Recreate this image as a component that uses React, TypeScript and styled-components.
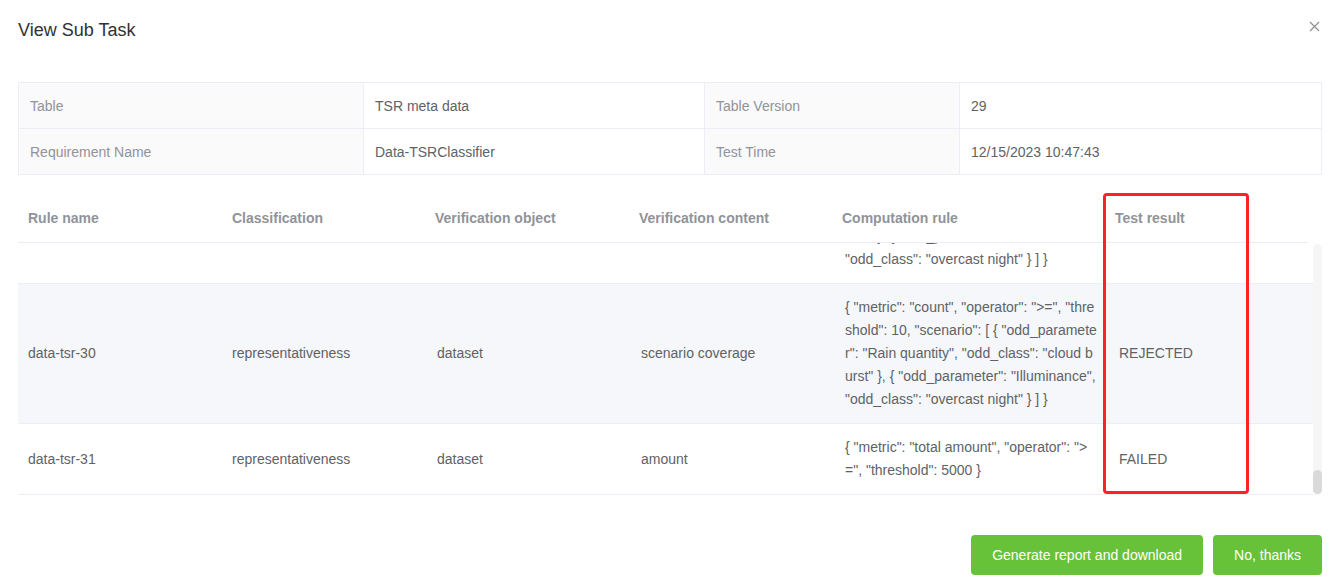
import React, { useLayoutEffect, useRef } from 'react';
import styled, { createGlobalStyle } from 'styled-components';

const GlobalStyle = createGlobalStyle`
  html, body {
    margin: 0;
    padding: 0;
    background: #fff;
    font-family: "Liberation Sans", Arial, Helvetica, sans-serif;
  }
`;

const Dialog = styled.div`
  width: 1337px;
  height: 587px;
  box-sizing: border-box;
  background: #fff;
  padding: 0 15px 0 18px;
  display: flex;
  flex-direction: column;
`;

const Header = styled.div`
  display: flex;
  align-items: center;
  justify-content: space-between;
  height: 60px;
`;

const Title = styled.h2`
  margin: 0;
  font-size: 18px;
  font-weight: 400;
  color: #303133;
  line-height: 24px;
`;

const CloseButton = styled.button`
  border: none;
  background: none;
  padding: 0;
  margin-right: 2px;
  margin-top: -8px;
  width: 12px;
  height: 12px;
  display: flex;
  align-items: center;
  justify-content: center;
  cursor: pointer;
`;

const InfoTable = styled.table`
  margin-top: 22px;
  width: 1304px;
  border-collapse: collapse;
  table-layout: fixed;
  font-size: 14px;
`;

const InfoCell = styled.td<{ $label?: boolean }>`
  height: 46px;
  box-sizing: border-box;
  padding: 0 11px;
  border: 1px solid #ebeef5;
  background: ${({ $label }) => ($label ? '#fafafa' : '#fff')};
  color: ${({ $label }) => ($label ? '#909399' : '#606266')};
`;

const Section = styled.div`
  position: relative;
  margin-top: 20px;
  width: 1304px;
`;

const GridTable = styled.table<{ $width: number }>`
  border-collapse: collapse;
  table-layout: fixed;
  width: ${({ $width }) => $width}px;
  font-size: 14px;
`;

const HeadWrap = styled.div`
  width: 1290px;
  overflow: hidden;
  border-bottom: 1px solid #ebeef5;
`;

const HeadCell = styled.th`
  text-align: left;
  padding: 12px 10px;
  height: 46px;
  box-sizing: border-box;
  font-weight: 700;
  color: #909399;
  line-height: 23px;
`;

const BodyArea = styled.div`
  display: flex;
  height: 252px;
`;

const BodyWrap = styled.div`
  width: 1295px;
  height: 100%;
  overflow-y: scroll;
  scrollbar-width: none;

  &::-webkit-scrollbar {
    display: none;
  }
`;

const ScrollTrack = styled.div`
  width: 9px;
  height: 251px;
  margin-top: 1px;
  background: #f6f6f6;
  border-radius: 5px;
  display: flex;
  flex-direction: column;
  justify-content: flex-end;
  padding-bottom: 1px;
  box-sizing: border-box;
`;

const ScrollThumb = styled.div`
  height: 24px;
  background: #dadada;
  border-radius: 5px;
`;

const Row = styled.tr<{ $hover?: boolean }>`
  background: ${({ $hover }) => ($hover ? '#f5f7fa' : '#fff')};
  border-bottom: 1px solid #ebeef5;
`;

const Cell = styled.td<{ $wrap?: boolean }>`
  padding: 12px 10px;
  color: #606266;
  line-height: 23px;
  vertical-align: middle;
  word-break: ${({ $wrap }) => ($wrap ? 'break-all' : 'normal')};
`;

const Highlight = styled.div`
  position: absolute;
  left: 1085px;
  top: -2px;
  width: 140px;
  height: 295px;
  border: 3px solid #ff2222;
  border-radius: 4px;
  pointer-events: none;
`;

const Footer = styled.div`
  display: flex;
  justify-content: flex-end;
  gap: 10px;
  width: 1304px;
  margin-top: 40px;
`;

const Button = styled.button`
  height: 40px;
  padding: 0 21px;
  border: none;
  border-radius: 4px;
  background: #67c23a;
  color: #fff;
  font-family: inherit;
  font-size: 14px;
  cursor: pointer;
`;

const headWidths = [204, 203, 204, 203, 273, 203];
const bodyWidths = [204, 205, 204, 204, 274, 204];
const titles = [
  'Rule name',
  'Classification',
  'Verification object',
  'Verification content',
  'Computation rule',
  'Test result',
];

const coverageRule =
  '{ "metric": "count", "operator": ">=", "threshold": 10, "scenario": [ { "odd_parameter": "Rain quantity", "odd_class": "cloud burst" }, { "odd_parameter": "Illuminance", "odd_class": "overcast night" } ] }';

interface RuleRow {
  name: string;
  classification: string;
  object: string;
  content: string;
  rule: string;
  result: string;
}

const rows: RuleRow[] = [
  ...Array.from({ length: 16 }, (_, i) => ({
    name: `data-tsr-${14 + i}`,
    classification: 'representativeness',
    object: 'dataset',
    content: 'scenario coverage',
    rule: coverageRule,
    result: i % 3 === 0 ? 'PASSED' : 'REJECTED',
  })),
  {
    name: 'data-tsr-30',
    classification: 'representativeness',
    object: 'dataset',
    content: 'scenario coverage',
    rule: coverageRule,
    result: 'REJECTED',
  },
  {
    name: 'data-tsr-31',
    classification: 'representativeness',
    object: 'dataset',
    content: 'amount',
    rule: '{ "metric": "total amount", "operator": ">=", "threshold": 5000 }',
    result: 'FAILED',
  },
];

const Cols = ({ widths }: { widths: number[] }) => (
  <colgroup>
    {widths.map((w, i) => (
      <col key={i} width={w} />
    ))}
  </colgroup>
);

const App: React.FC = () => {
  const bodyRef = useRef<HTMLDivElement>(null);

  useLayoutEffect(() => {
    const el = bodyRef.current;
    if (el) el.scrollTop = el.scrollHeight;
  }, []);

  return (
    <Dialog>
      <GlobalStyle />
      <Header>
        <Title>View Sub Task</Title>
        <CloseButton aria-label="Close">
          <svg width="11" height="11" viewBox="0 0 11 11">
            <path d="M1 1L10 10M10 1L1 10" stroke="#909399" strokeWidth="1.3" />
          </svg>
        </CloseButton>
      </Header>

      <InfoTable>
        <colgroup>
          <col width={345} />
          <col width={341} />
          <col width={255} />
          <col />
        </colgroup>
        <tbody>
          <tr>
            <InfoCell $label>Table</InfoCell>
            <InfoCell>TSR meta data</InfoCell>
            <InfoCell $label>Table Version</InfoCell>
            <InfoCell>29</InfoCell>
          </tr>
          <tr>
            <InfoCell $label>Requirement Name</InfoCell>
            <InfoCell>Data-TSRClassifier</InfoCell>
            <InfoCell $label>Test Time</InfoCell>
            <InfoCell>12/15/2023 10:47:43</InfoCell>
          </tr>
        </tbody>
      </InfoTable>

      <Section>
        <HeadWrap>
          <GridTable $width={1290}>
            <Cols widths={headWidths} />
            <thead>
              <tr>
                {titles.map((t) => (
                  <HeadCell key={t}>{t}</HeadCell>
                ))}
              </tr>
            </thead>
          </GridTable>
        </HeadWrap>
        <BodyArea>
          <BodyWrap ref={bodyRef}>
            <GridTable $width={1295}>
              <Cols widths={bodyWidths} />
              <tbody>
                {rows.map((r) => (
                  <Row key={r.name} $hover={r.name === 'data-tsr-30'}>
                    <Cell>{r.name}</Cell>
                    <Cell>{r.classification}</Cell>
                    <Cell>{r.object}</Cell>
                    <Cell>{r.content}</Cell>
                    <Cell $wrap>{r.rule}</Cell>
                    <Cell>{r.result}</Cell>
                  </Row>
                ))}
              </tbody>
            </GridTable>
          </BodyWrap>
          <ScrollTrack>
            <ScrollThumb />
          </ScrollTrack>
        </BodyArea>
        <Highlight />
      </Section>

      <Footer>
        <Button>Generate report and download</Button>
        <Button>No, thanks</Button>
      </Footer>
    </Dialog>
  );
};

export default App;
